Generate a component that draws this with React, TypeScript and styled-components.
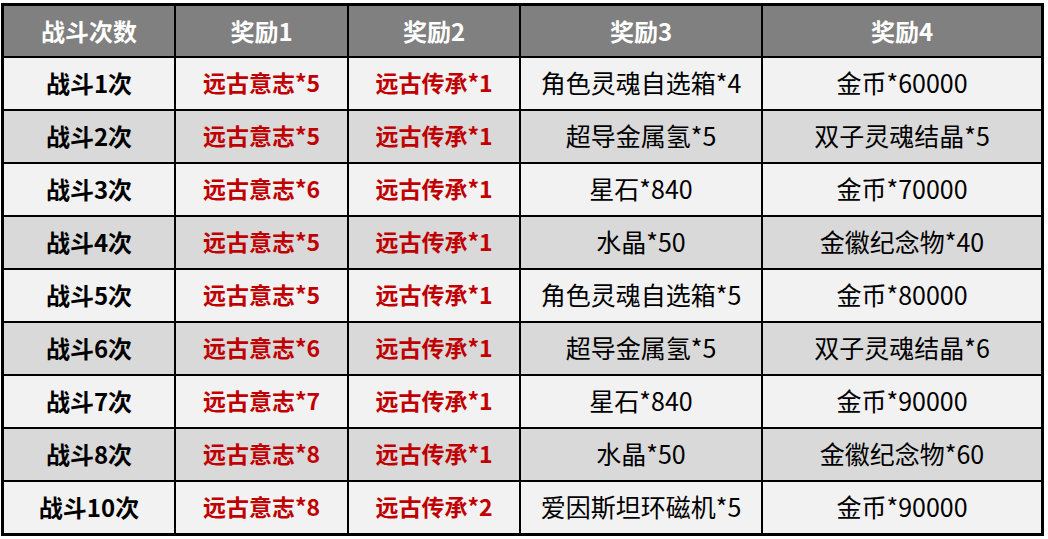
import React from 'react';
import styled, { createGlobalStyle } from 'styled-components';

const GlobalStyle = createGlobalStyle`
  html, body {
    margin: 0;
    padding: 0;
    background: #ffffff;
  }
  body {
    font-family: "Noto Sans CJK SC", "Noto Sans", sans-serif;
  }
`;

const Page = styled.div`
  padding: 3px 0 0 1px;
`;

const Table = styled.div`
  width: 1043px;
  box-sizing: border-box;
  border: 3px solid #000;
  background: #000;
  display: grid;
  grid-template-columns: 170px 171px 170px 240px 278px;
  grid-template-rows: 50px repeat(9, 51px);
  gap: 2px;
`;

const HeaderCell = styled.div`
  background: #808080;
  color: #ffffff;
  font-size: 24px;
  font-weight: 700;
  display: flex;
  align-items: center;
  justify-content: center;
  padding-bottom: 2px;
  white-space: nowrap;
`;

type Kind = 'name' | 'red' | 'plain';

const sizes: Record<Kind, string> = { name: '24px', red: '23px', plain: '25px' };

const Cell = styled.div<{ $alt: boolean; $kind: Kind }>`
  background: ${p => (p.$alt ? '#d9d9d9' : '#f2f2f2')};
  color: ${p => (p.$kind === 'red' ? '#c00000' : '#000000')};
  font-size: ${p => sizes[p.$kind]};
  font-weight: ${p => (p.$kind === 'plain' ? 400 : 700)};
  display: flex;
  align-items: center;
  justify-content: center;
  padding-bottom: 3px;
  white-space: nowrap;
`;

const headers = ['战斗次数', '奖励1', '奖励2', '奖励3', '奖励4'];

const rows: string[][] = [
  ['战斗1次', '远古意志*5', '远古传承*1', '角色灵魂自选箱*4', '金币*60000'],
  ['战斗2次', '远古意志*5', '远古传承*1', '超导金属氢*5', '双子灵魂结晶*5'],
  ['战斗3次', '远古意志*6', '远古传承*1', '星石*840', '金币*70000'],
  ['战斗4次', '远古意志*5', '远古传承*1', '水晶*50', '金徽纪念物*40'],
  ['战斗5次', '远古意志*5', '远古传承*1', '角色灵魂自选箱*5', '金币*80000'],
  ['战斗6次', '远古意志*6', '远古传承*1', '超导金属氢*5', '双子灵魂结晶*6'],
  ['战斗7次', '远古意志*7', '远古传承*1', '星石*840', '金币*90000'],
  ['战斗8次', '远古意志*8', '远古传承*1', '水晶*50', '金徽纪念物*60'],
  ['战斗10次', '远古意志*8', '远古传承*2', '爱因斯坦环磁机*5', '金币*90000'],
];

const kindFor = (col: number): Kind => (col === 0 ? 'name' : col < 3 ? 'red' : 'plain');

export default function App(): React.JSX.Element {
  return (
    <>
      <GlobalStyle />
      <Page>
        <Table>
          {headers.map(h => (
            <HeaderCell key={h}>{h}</HeaderCell>
          ))}
          {rows.map((row, r) =>
            row.map((text, c) => (
              <Cell key={`${r}-${c}`} $alt={r % 2 === 1} $kind={kindFor(c)}>
                {text}
              </Cell>
            ))
          )}
        </Table>
      </Page>
    </>
  );
}
